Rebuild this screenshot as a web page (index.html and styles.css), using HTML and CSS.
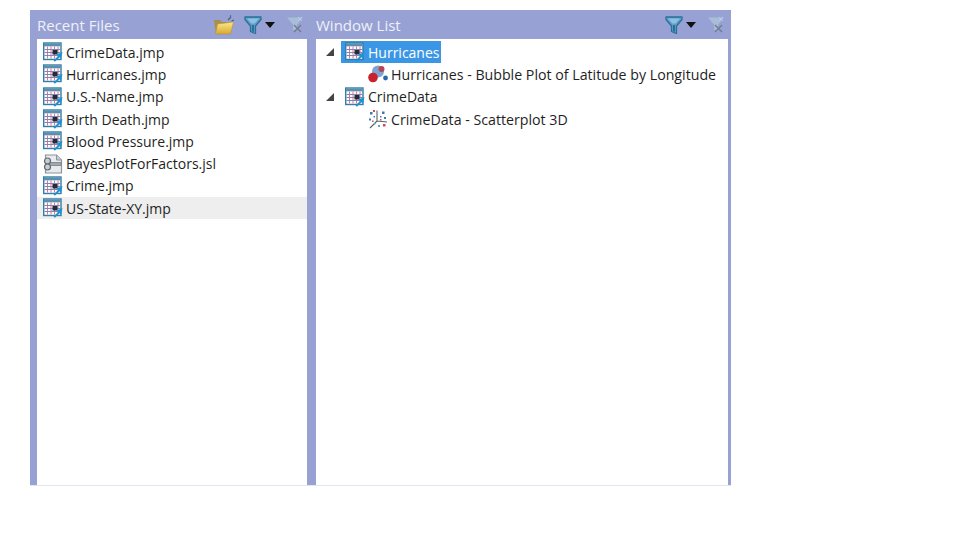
FILE: index.html
```html
<!DOCTYPE html>
<html lang="en">
<head>
<meta charset="utf-8">
<title>JMP Home Window</title>
<link rel="stylesheet" href="styles.css">
</head>
<body>
<svg class="defs" width="0" height="0" aria-hidden="true">
  <symbol id="table" viewBox="0 0 20 20">
    <rect x="0.7" y="1" width="17.300" height="16.500" fill="#fbfbff" stroke="#2f7fa6" stroke-width="1.400"/>
    <rect x="1" y="1.500" width="16.600" height="2.800" fill="#5b8fb0"/>
    <path d="M4.500 4.500v12M8 4.500v12M11.500 4.500v12M15 4.500v12" stroke="#d8788e" stroke-width="1"/>
    <path d="M1.500 7.500h16M1.500 10.500h16M1.500 13.500h16" stroke="#7f86b5" stroke-width="1"/>
    <rect x="9.500" y="8" width="5" height="4.500" fill="#232a3a"/>
    <path d="M19.500 10 13.500 12.500l1.600 1.400-4.600 4.500 1.400 1.300 4.500-4.500 1.500 1.500z" fill="#1c94d2"/>
  </symbol>
  <symbol id="script" viewBox="0 0 20 20">
    <path d="M2.500 1h11l5 5v13h-16z" fill="#e8ebed" stroke="#8b949b" stroke-width="1.200"/>
    <path d="M13.500 1v5h5" fill="#c7cdd2" stroke="#8b949b"/>
    <rect x="3" y="8.500" width="15" height="3" fill="#a2a9ae" stroke="#7a8288" stroke-width=".8"/>
    <circle cx="4.500" cy="7" r="3" fill="#c9ced2" stroke="#5f686f" stroke-width="1.200"/>
    <circle cx="4.500" cy="13" r="3" fill="#c9ced2" stroke="#5f686f" stroke-width="1.200"/>
  </symbol>
  <symbol id="bubble" viewBox="0 0 20 20">
    <circle cx="10" cy="7.500" r="6" fill="#7da4d1"/>
    <circle cx="5" cy="13.500" r="4.800" fill="#c9202e"/>
    <circle cx="13.500" cy="5" r="3" fill="#b2475a"/>
    <circle cx="17.500" cy="14" r="2.400" fill="#2769ad"/>
  </symbol>
  <symbol id="scatter" viewBox="0 0 20 20">
    <path d="M9 1.500V12M9 12l10 1M9 12l-7 7" stroke="#59626c" stroke-width="1.100" fill="none"/>
    <path d="M2 3h2.500v2.500H2zM5.500 7H7v1.500H5.500zM1 9.500h2V11.500H1zM14 2.500h2.500V5H14zM12 7h1.500v1.500H12zM16 8h2v2h-2z" fill="#3f78b5"/>
    <path d="M5 1h2v2H5zM12 10h1.500v1.500H12zM15 15h2.500v2.500H15zM4 11.500h1.500V13H4z" fill="#cc4a5c"/>
    <path d="M10 16h2v2h-2zM6 14h1.500v1.500H6z" fill="#5fa7c9"/>
  </symbol>
  <symbol id="funnel" viewBox="0 0 18 18">
    <path d="M1 1h16v2.500l-5.500 6.500v7.500l-5-2V10L1 3.500z" fill="#5f9fc9" stroke="#2b6f9a" stroke-width="1.300" stroke-linejoin="round"/>
    <path d="M3 2.500h12l-4.500 5H7.500z" fill="#8fc0e0"/>
    <path d="M8 9h2v7l-2-.8z" fill="#2a7199"/>
  </symbol>
  <symbol id="clearfilter" viewBox="0 0 18 18">
    <path d="M1 1.500h11l5 0-6 7V15l-4-1.500V8.500z" fill="#a8c1d9" opacity=".9"/>
    <path d="M8 9l7 7M15 9l-7 7" stroke="#737d92" stroke-width="1.500"/>
    <path d="M12 1l4 4M16 1l-4 4" stroke="#b8cbe0" stroke-width="1"/>
  </symbol>
  <symbol id="folder" viewBox="0 0 22 20">
    <defs>
      <linearGradient id="folderfill" x1="0" y1="0" x2="0" y2="1">
        <stop offset="0" stop-color="#fbe88d"/>
        <stop offset="1" stop-color="#d9a92f"/>
      </linearGradient>
    </defs>
    <path d="M1 5h6l2 2h7v12H3z" fill="#a9904a"/>
    <path d="M4.500 9 20.500 7l-3 12H2.500z" fill="url(#folderfill)" stroke="#b0923c" stroke-width=".6"/>
    <path d="M15 5l3-3M18.500 6l2.500-1M17 1.500l1-1" stroke="#4f5a78" stroke-width="1.100"/>
  </symbol>
</svg>

<main class="panel">
  <section class="pane pane-recent">
    <header class="pane-head">
      <h2 class="pane-title">Recent Files</h2>
      <div class="tools">
        <svg class="tool-folder"><use href="#folder"/></svg>
        <svg class="tool-funnel"><use href="#funnel"/></svg>
        <span class="caret"></span>
        <svg class="tool-clear"><use href="#clearfilter"/></svg>
      </div>
    </header>
    <ul class="list">
      <li class="row"><svg class="ico"><use href="#table"/></svg>CrimeData.jmp</li>
      <li class="row"><svg class="ico"><use href="#table"/></svg>Hurricanes.jmp</li>
      <li class="row"><svg class="ico"><use href="#table"/></svg>U.S.-Name.jmp</li>
      <li class="row"><svg class="ico"><use href="#table"/></svg>Birth Death.jmp</li>
      <li class="row"><svg class="ico"><use href="#table"/></svg>Blood Pressure.jmp</li>
      <li class="row"><svg class="ico"><use href="#script"/></svg>BayesPlotForFactors.jsl</li>
      <li class="row"><svg class="ico"><use href="#table"/></svg>Crime.jmp</li>
      <li class="row row-hover"><svg class="ico"><use href="#table"/></svg>US-State-XY.jmp</li>
    </ul>
  </section>
  <section class="pane pane-windows">
    <header class="pane-head">
      <h2 class="pane-title">Window List</h2>
      <div class="tools">
        <svg class="tool-funnel"><use href="#funnel"/></svg>
        <span class="caret"></span>
        <svg class="tool-clear"><use href="#clearfilter"/></svg>
      </div>
    </header>
    <ul class="list tree">
      <li class="row node"><span class="twisty"></span><span class="label label-selected"><svg class="ico"><use href="#table"/></svg>Hurricanes</span></li>
      <li class="row leaf"><svg class="ico"><use href="#bubble"/></svg>Hurricanes - Bubble Plot of Latitude by Longitude</li>
      <li class="row node"><span class="twisty"></span><span class="label"><svg class="ico"><use href="#table"/></svg>CrimeData</span></li>
      <li class="row leaf"><svg class="ico"><use href="#scatter"/></svg>CrimeData - Scatterplot 3D</li>
    </ul>
  </section>
</main>
</body>
</html>
```
FILE: styles.css
```css
* { box-sizing: border-box; }
html, body { margin: 0; height: 100%; background: #fff; }
body {
  padding: 10px 0 0 30px;
  font-family: "Open Sans", "Noto Sans", sans-serif;
  font-size: 14px;
  color: #1f1f1f;
}
.defs { position: absolute; }

.panel {
  display: flex;
  width: 701px;
  height: 476px;
  padding-right: 3px;
  background: #98a1d3;
  border-bottom: 1px solid #e4e4ee;
}
.pane { display: flex; flex-direction: column; min-width: 0; }
.pane-recent { width: 286px; }
.pane-windows { flex: 1; }
.pane-recent .list { margin: 0 9px 0 7px; }
.pane-recent .pane-head { padding-left: 7px; }

.pane-head {
  display: flex;
  align-items: center;
  justify-content: space-between;
  height: 29px;
  flex: none;
}
.pane-title {
  margin: 0;
  font-size: 15px;
  font-weight: 400;
  color: #eef0fa;
}
.tools { display: flex; align-items: center; padding-right: 3px; }
.pane-recent .tools { padding-right: 12px; }
.tool-folder { width: 22px; height: 20px; margin-right: 9px; }
.tool-funnel { width: 18px; height: 18px; margin-right: 3px; }
.tool-clear { width: 18px; height: 18px; margin-left: 11px; }
.caret {
  width: 0;
  height: 0;
  border-left: 5px solid transparent;
  border-right: 5px solid transparent;
  border-top: 6px solid #111;
}

.list {
  flex: 1;
  margin: 0;
  padding: 2px 0 0;
  list-style: none;
  background: #fff;
}
.row {
  display: flex;
  align-items: center;
  height: 22.3px;
  padding-left: 6px;
  white-space: nowrap;
}
.row-hover { background: #eeeeee; }
.ico { width: 20px; height: 20px; margin-right: 3px; flex: none; }

.node { padding-left: 10px; }
.leaf { padding-left: 52px; font-size: 14.2px; }
.twisty {
  width: 0;
  height: 0;
  margin-right: 7px;
  border-left: 8px solid transparent;
  border-bottom: 8px solid #444;
}
.label {
  display: flex;
  align-items: center;
  height: 22px;
  padding: 0 1px 0 4px;
}
.label-selected { background: #3b97e6; color: #fff; }
```
